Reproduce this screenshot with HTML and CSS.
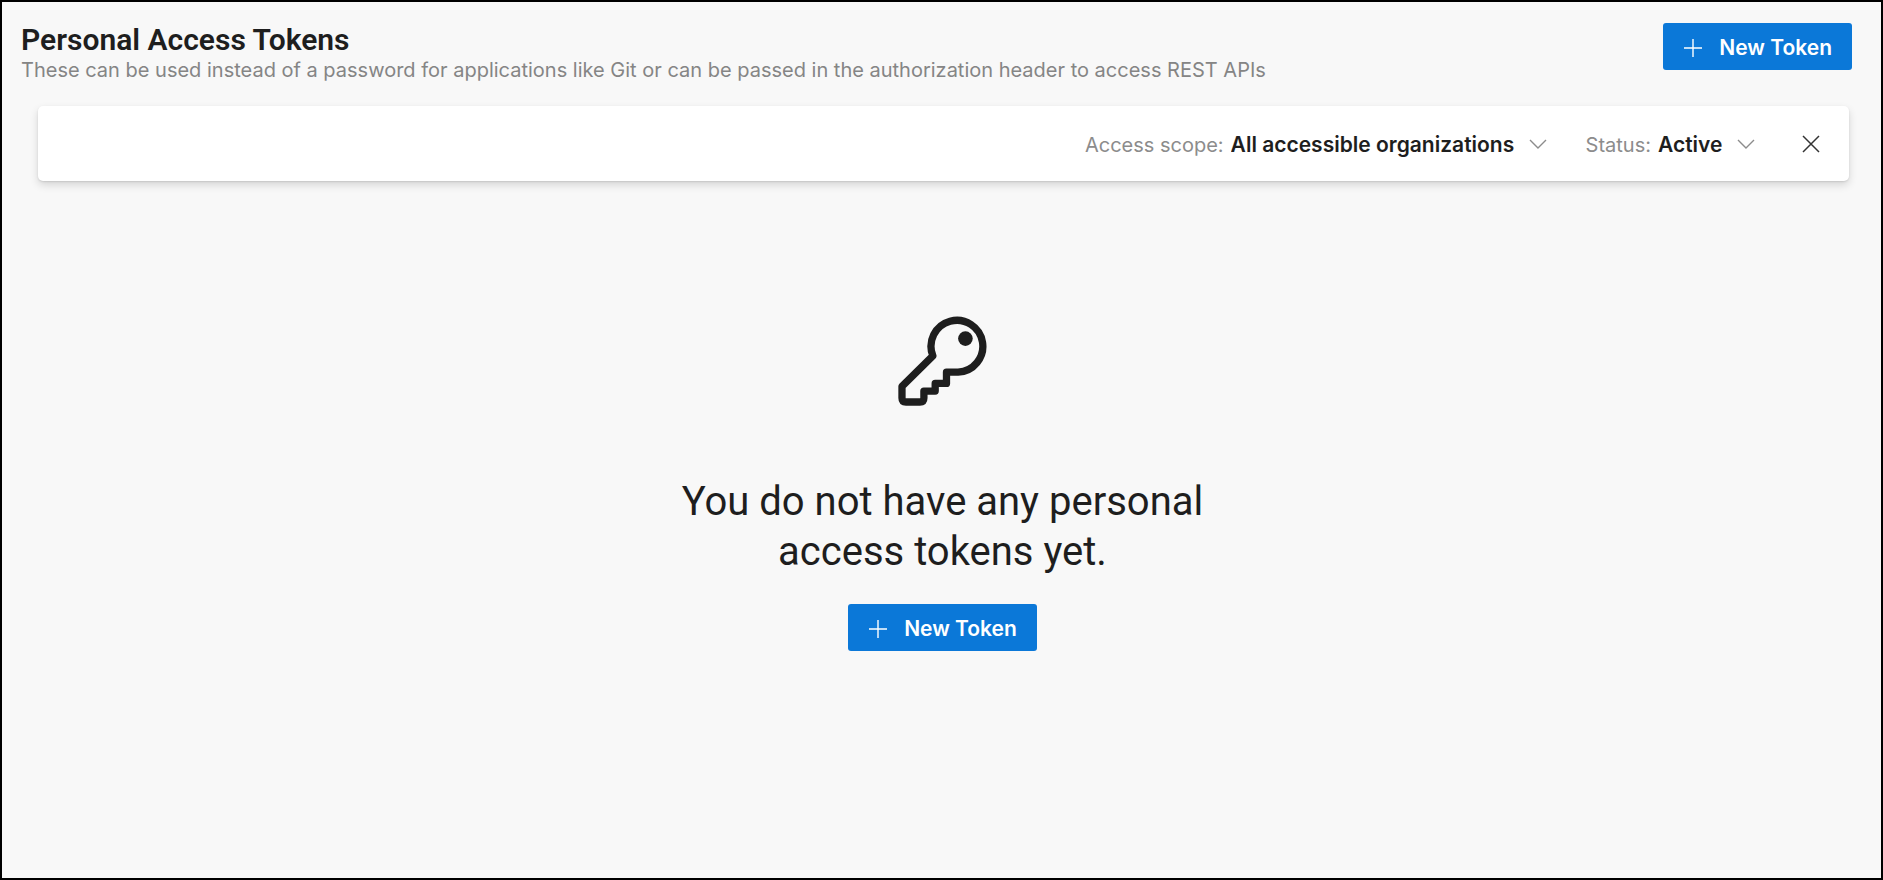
FILE: index.html
```
<!DOCTYPE html>
<html lang="en">
	<head>
		<meta charset="utf-8">
		<meta name="viewport" content="width=device-width, initial-scale=1">
		<title>Personal Access Tokens</title>
		<link rel="stylesheet" href="styles.css">
	</head>
	<body>

		<div class="page">

			<header class="page-header">
				<div class="page-heading">
					<h1 class="page-title">Personal Access Tokens</h1>
					<p class="page-desc">These can be used instead of a password for applications like Git or can be passed in the authorization header to access REST APIs</p>
				</div>
				<button type="button" class="btn-primary">
					<svg class="icon-plus" viewBox="0 0 18 18" aria-hidden="true"><path d="M9 0v18M0 9h18"/></svg>
					New Token
				</button>
			</header>

			<!-- filters -->
			<form class="filter-bar">
				<div class="filter">
					<label for="scope">Access scope:</label>
					<select id="scope">
						<option>All accessible organizations</option>
					</select>
					<svg class="icon-chevron" viewBox="0 0 18 10" aria-hidden="true"><path d="M1 1l8 8 8-8"/></svg>
				</div>
				<div class="filter">
					<label for="status">Status:</label>
					<select id="status">
						<option>Active</option>
					</select>
					<svg class="icon-chevron" viewBox="0 0 18 10" aria-hidden="true"><path d="M1 1l8 8 8-8"/></svg>
				</div>
				<button type="reset" class="filter-clear" aria-label="Clear filters">
					<svg class="icon-close" viewBox="0 0 18 18" aria-hidden="true"><path d="M1 1l16 16M17 1L1 17"/></svg>
				</button>
			</form>

			<!-- empty state -->
			<main class="empty">
				<svg class="icon-key" viewBox="84 77 271 271" aria-hidden="true">
					<path d="M189 197A78 78 0 1 1 265 246H230V280H196V303H162V324Q162 336 150 336H108Q96 336 96 324V289L189 197Z"/>
					<circle cx="287" cy="145" r="22"/>
				</svg>
				<h2 class="empty-title">You do not have any personal access tokens yet.</h2>
				<button type="button" class="btn-primary">
					<svg class="icon-plus" viewBox="0 0 18 18" aria-hidden="true"><path d="M9 0v18M0 9h18"/></svg>
					New Token
				</button>
			</main>

		</div>

	</body>
</html>
```
FILE: styles.css
```
*{
	box-sizing: border-box;
}
body{
	margin: 0;
	font-family: Inter, "Liberation Sans", sans-serif;
	font-size: 20px;
	line-height: 24px;
	color: #1e1e1e;
	background: #f8f8f8;
}
h1, h2, p{
	margin: 0;
}
h1, h2{
	font-family: Roboto, "Liberation Sans", sans-serif;
}
button, select{
	font-family: inherit;
	font-size: 21px;
	line-height: inherit;
	color: inherit;
	border: 0;
	cursor: pointer;
}
svg{
	display: block;
	flex: none;
	fill: none;
}

.page{
	min-height: 100vh;
	border: 2px solid #000;
}
.page-header{
	display: flex;
	justify-content: space-between;
	align-items: flex-start;
	padding: 20px 29px 0 19px;
}
.page-title{
	font-size: 30px;
	font-weight: 600;
	line-height: 36px;
}
.page-desc{
	color: #858585;
}

.btn-primary{
	display: flex;
	align-items: center;
	gap: 17px;
	height: 47px;
	padding: 2px 20px 0 21px;
	margin-top: 1px;
	font-weight: 600;
	white-space: nowrap;
	color: #fff;
	background: #0b78d8;
	border-radius: 3px;
}
.icon-plus{
	width: 18px;
	height: 18px;
	stroke: #fff;
	stroke-width: 1.4;
}

.filter-bar{
	display: flex;
	justify-content: flex-end;
	align-items: center;
	gap: 39px;
	height: 75px;
	margin: 24px 32px 0 36px;
	padding: 0 21px;
	background: #fff;
	border-radius: 5px;
	box-shadow: 0 4px 9px rgba(0, 0, 0, 0.14), 0 1px 2px rgba(0, 0, 0, 0.1);
}
.filter{
	display: flex;
	align-items: center;
}
.filter label{
	padding-top: 2px;
	color: #8c8c8c;
}
.filter select{
	appearance: none;
	margin: 0 14px 0 7px;
	padding: 2px 0 0;
	font-weight: 600;
	background: none;
}
.icon-chevron{
	width: 18px;
	height: 10px;
	stroke: #8c8c8c;
	stroke-width: 1.4;
}
.filter-clear{
	padding: 8px;
	background: none;
}
.icon-close{
	width: 18px;
	height: 18px;
	stroke: #333;
	stroke-width: 1.5;
}

.empty{
	display: flex;
	flex-direction: column;
	align-items: center;
	padding: 135px 18px 40px 20px;
}
.icon-key{
	width: 90px;
	height: 90px;
	stroke: #1e1e1e;
	stroke-width: 22;
	stroke-linejoin: round;
}
.icon-key circle{
	fill: #1e1e1e;
	stroke: none;
}
.empty-title{
	max-width: 560px;
	margin: 71px 0 26px;
	font-size: 40px;
	font-weight: 400;
	line-height: 50px;
	text-align: center;
}
```
